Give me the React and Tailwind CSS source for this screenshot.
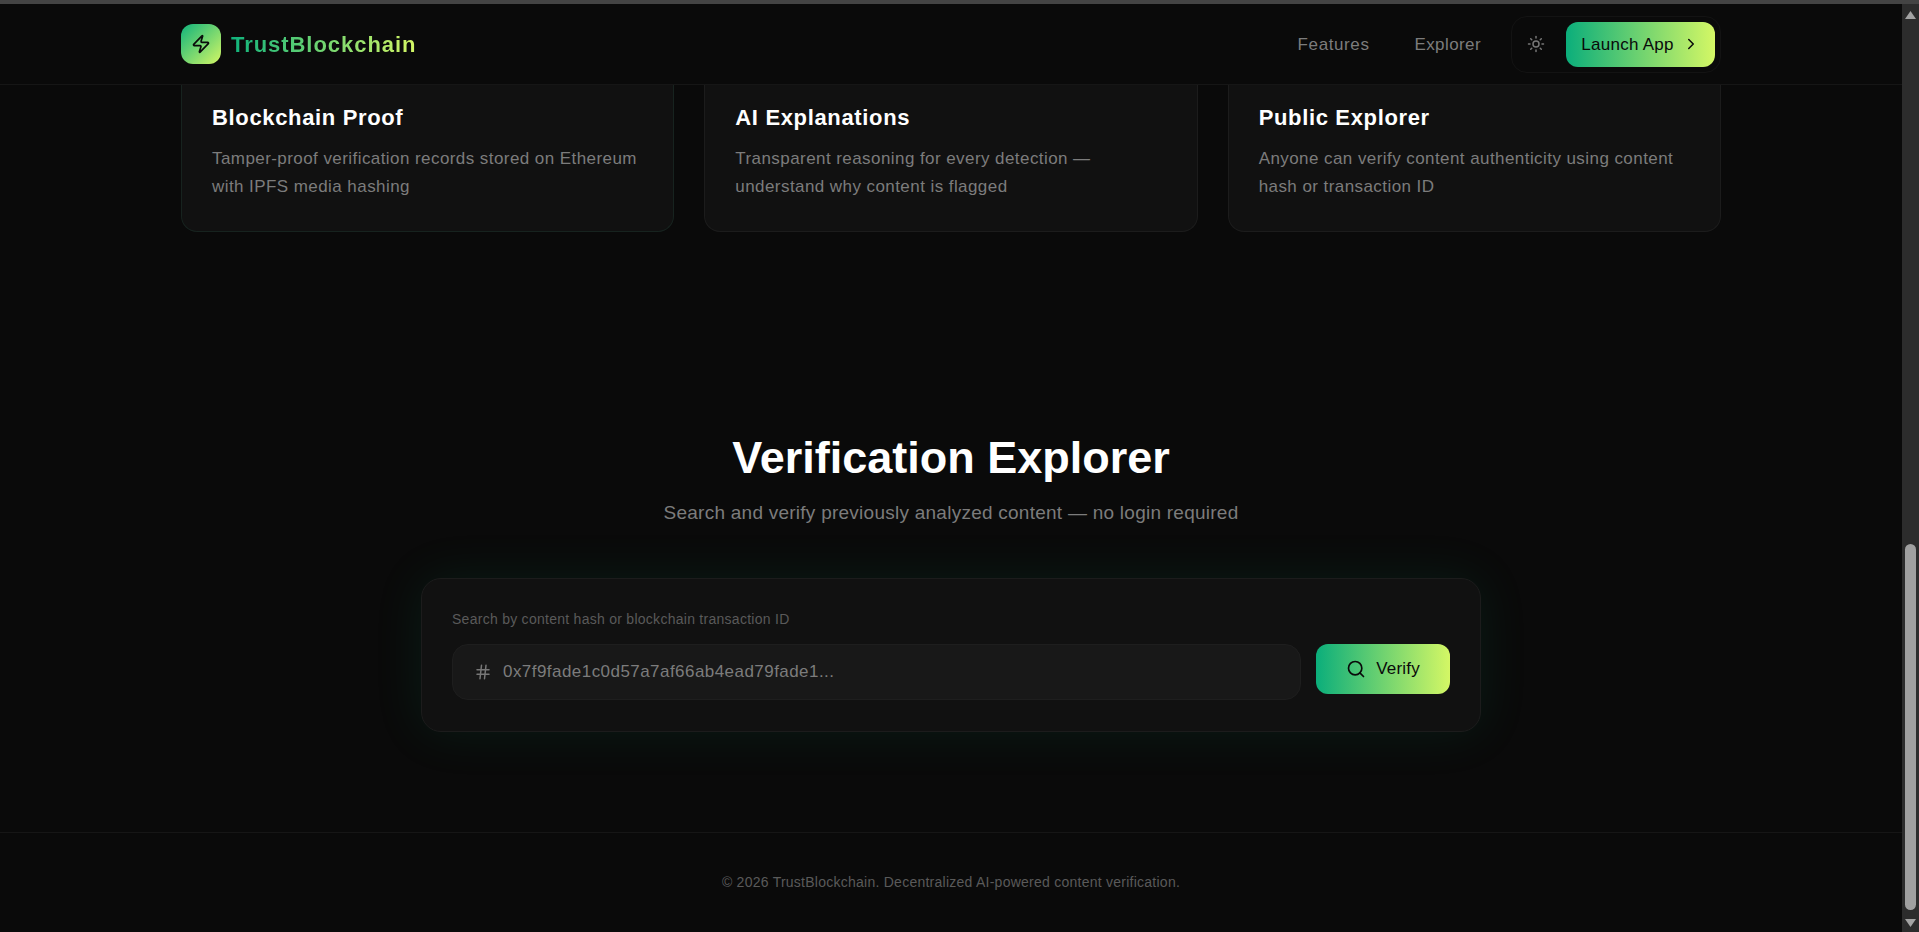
import React from "react";
import { Zap, Sun, ChevronRight, Hash, Search } from "lucide-react";

const cards = [
  { t: "Blockchain Proof", d: ["Tamper-proof verification records stored on Ethereum", "with IPFS media hashing"], b: "border-[#17231f]" },
  { t: "AI Explanations", d: ["Transparent reasoning for every detection —", "understand why content is flagged"], b: "border-[#1c1c1c]" },
  { t: "Public Explorer", d: ["Anyone can verify content authenticity using content", "hash or transaction ID"], b: "border-[#1c1c1c]" },
];

export default function App() {
  return (
    <div className="h-[932px] overflow-hidden flex flex-col bg-[#0a0a0a] font-['Liberation_Sans',sans-serif]">
      <div className="h-1 bg-[#444444] shrink-0" />
      <div className="flex flex-1 min-h-0">
        <div className="flex-1 min-w-0 flex flex-col">
          <header className="h-[81px] shrink-0 border-b border-[#161616] bg-[#0a0a0a]">
            <div className="w-[1540px] mx-auto h-full flex items-center justify-between">
              <div className="flex items-center gap-[10px]">
                <div className="w-10 h-10 rounded-xl bg-[linear-gradient(135deg,#10b37c,#d4f765)] flex items-center justify-center">
                  <Zap size={20} color="#0a0a0a" strokeWidth={2} />
                </div>
                <span className="text-[22px] font-bold tracking-[0.95px] pt-[1px] bg-[linear-gradient(90deg,#10b37c,#d4f765)] bg-clip-text text-transparent">TrustBlockchain</span>
              </div>
              <div className="flex items-center">
                <span className="text-[17px] tracking-[0.6px] pt-[1px] text-[#7c7c7c]">Features</span>
                <span className="text-[17px] tracking-[0.4px] pt-[1px] text-[#7c7c7c] ml-[45px]">Explorer</span>
                <div className="ml-[30px] h-[57px] w-[210px] rounded-2xl border border-[#131313] flex items-center pl-[15px] pr-[5px] justify-between">
                  <Sun size={18} color="#777777" />
                  <div className="h-[45px] w-[149px] rounded-xl bg-[linear-gradient(90deg,#0bae7b,#d4f765)] flex items-center justify-center gap-[8px]">
                    <span className="text-[17px] tracking-[0.25px] pt-[1px] text-[#0a0a0a]">Launch App</span>
                    <ChevronRight size={18} color="#0a0a0a" />
                  </div>
                </div>
              </div>
            </div>
          </header>

          <main className="flex-1 min-h-0 flex flex-col">
            <section className="w-[1540px] mx-auto grid grid-cols-3 gap-[30px]">
              {cards.map((c) => (
                <div key={c.t} className={`bg-[#111111] border border-t-0 ${c.b} rounded-b-2xl px-[30px] pt-[19px] pb-[30px]`}>
                  <h3 className="text-[22px] leading-[28px] font-bold tracking-[0.65px] text-white">{c.t}</h3>
                  <p className="mt-[13px] text-[17px] leading-[28px] tracking-[0.43px] text-[#7c7c7c]">
                    {c.d[0]}<br />{c.d[1]}
                  </p>
                </div>
              ))}
            </section>

            <section className="flex flex-col items-center pt-[195px]">
              <h2 className="text-[45px] leading-[62px] font-bold text-white">Verification Explorer</h2>
              <p className="mt-[10px] text-[19px] leading-[28px] tracking-[0.25px] text-[#7c7c7c]">Search and verify previously analyzed content — no login required</p>
              <div className="mt-[51px] w-[1060px] h-[154px] rounded-[20px] bg-[#111111] border border-[#1c1c1c] shadow-[0_0_50px_rgba(16,185,129,0.1)] p-[30px]">
                <div className="text-[14px] leading-[20px] tracking-[0.27px] font-light text-[#5a5a5a]">Search by content hash or blockchain transaction ID</div>
                <div className="mt-[15px] flex items-start gap-[15px]">
                  <div className="flex-1 h-[56px] rounded-2xl bg-[#181818] border border-[#1e1e1e] flex items-center pl-[21px] gap-[11px]">
                    <Hash size={18} color="#777777" />
                    <span className="text-[17px] tracking-[0.45px] text-[#7c7c7c]">0x7f9fade1c0d57a7af66ab4ead79fade1...</span>
                  </div>
                  <div className="w-[134px] h-[50px] rounded-xl bg-[linear-gradient(90deg,#0bae7b,#d4f765)] flex items-center justify-center gap-[10px]">
                    <Search size={20} color="#0a0a0a" />
                    <span className="text-[17px] tracking-[0.2px] text-[#0a0a0a]">Verify</span>
                  </div>
                </div>
              </div>
            </section>

            <footer className="mt-auto h-[100px] border-t border-[#161616] flex items-center justify-center">
              <span className="text-[14px] tracking-[0.25px] font-light text-[#5a5a5a]">© 2026 TrustBlockchain. Decentralized AI-powered content verification.</span>
            </footer>
          </main>
        </div>

        <div className="w-[17px] shrink-0 bg-[#2c2c2c] flex flex-col items-center">
          <svg width="13" height="10" viewBox="0 0 13 10" className="mt-[6px]"><path d="M6.5 1 L12 9 L1 9 Z" fill="#a3a3a3" /></svg>
          <div className="mt-auto w-[11px] h-[366px] rounded-full bg-[#a0a0a0]" />
          <svg width="13" height="10" viewBox="0 0 13 10" className="mt-[8px] mb-[4px]"><path d="M1 1 L12 1 L6.5 9 Z" fill="#a3a3a3" /></svg>
        </div>
      </div>
    </div>
  );
}
